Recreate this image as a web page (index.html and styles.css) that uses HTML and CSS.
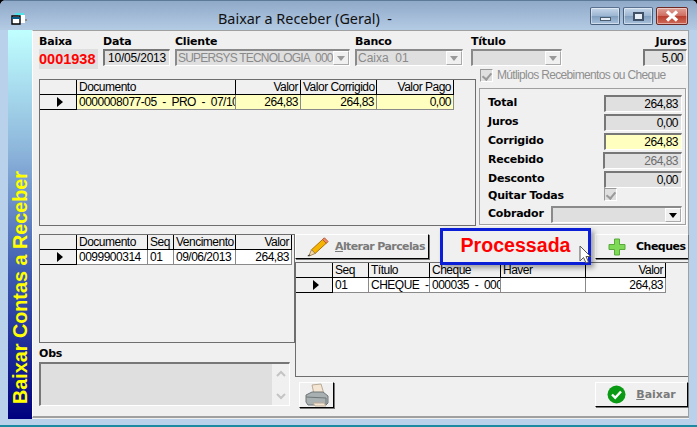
FILE: index.html
```html
<!DOCTYPE html>
<html lang="pt-BR">
<head>
    <meta charset="UTF-8">
    <title>Baixar a Receber (Geral)</title>
    <link rel="stylesheet" href="styles.css">
</head>
<body>
    <div class="window">
        <div class="titlebar">
            <svg class="app-icon" width="16" height="14" viewBox="0 0 16 14">
                <path d="M4 1h9v2H4z" fill="#4fe3ea"/>
                <path d="M7 3h7v8H7z" fill="#fff"/>
                <path d="M14 7h2v2h-2z" fill="#8a8a8a"/>
                <path d="M1 4h8v8H1z" fill="#fff" stroke="#000" stroke-width="1.4"/>
                <path d="M1 5h8v2H1z" fill="#0a5a8a"/>
            </svg>
            <span class="title">Baixar a Receber (Geral)&nbsp; -</span>
            <div class="caption-btns">
                <div class="cap-btn"><i class="cap-min"></i></div>
                <div class="cap-btn"><i class="cap-max"></i></div>
                <div class="cap-btn cap-close">
                    <svg width="16" height="12" viewBox="0 0 16 12"><path d="M3 1.500l10 9M13 1.500l-10 9" stroke="#fff" stroke-width="3.200"/></svg>
                </div>
            </div>
        </div>

        <div class="client">
            <div class="sidebar"><span class="sidebar-text">Baixar Contas a Receber</span></div>

            <div class="form">
                <div class="head-row">
                    <div class="head-cell">
                        <label>Baixa</label>
                        <div class="number">0001938</div>
                    </div>
                    <div class="head-cell">
                        <label>Data</label>
                        <div class="field field-date">10/05/2013</div>
                    </div>
                    <div class="head-cell">
                        <label>Cliente</label>
                        <div class="combo combo-cliente"><span>SUPERSYS TECNOLOGIA&nbsp; 000</span><b class="combo-arrow"></b></div>
                    </div>
                    <div class="head-cell">
                        <label>Banco</label>
                        <div class="combo combo-banco"><span>Caixa&nbsp; 01</span><b class="combo-arrow"></b></div>
                    </div>
                    <div class="head-cell">
                        <label>Título</label>
                        <div class="combo combo-titulo"><span></span><b class="combo-arrow"></b></div>
                    </div>
                    <div class="head-cell head-juros">
                        <label>Juros</label>
                        <div class="field num">5,00</div>
                    </div>
                </div>

                <div class="mid-row">
                    <div class="datagrid grid-docs">
                        <table>
                            <colgroup><col class="c-ind"><col style="width:159px"><col style="width:65px"><col style="width:76px"><col style="width:77px"></colgroup>
                            <tr><th></th><th>Documento</th><th class="num">Valor</th><th class="num">Valor Corrigido</th><th class="num">Valor Pago</th></tr>
                            <tr class="yellow"><th class="ind"><i class="arrow"></i></th><td>0000008077-05&nbsp; -&nbsp; PRO&nbsp; -&nbsp; 07/10</td><td class="num">264,83</td><td class="num">264,83</td><td class="num">0,00</td></tr>
                        </table>
                    </div>

                    <div class="side-col">
                        <div class="check-line">
                            <i class="check"></i>
                            <span>Mútliplos Recebimentos ou Cheque</span>
                        </div>
                        <div class="totals">
                            <div class="total-row"><label>Total</label><div class="field num">264,83</div></div>
                            <div class="total-row"><label>Juros</label><div class="field num">0,00</div></div>
                            <div class="total-row"><label>Corrigido</label><div class="field num field-yellow">264,83</div></div>
                            <div class="total-row"><label>Recebido</label><div class="field num field-off">264,83</div></div>
                            <div class="total-row"><label>Desconto</label><div class="field num">0,00</div></div>
                            <div class="total-row total-check"><label>Quitar Todas</label><i class="check"></i></div>
                            <div class="total-row total-combo"><label>Cobrador</label><div class="combo combo-cobrador"><span></span><b class="combo-arrow dark"></b></div></div>
                        </div>
                    </div>
                </div>

                <div class="low-row">
                    <div class="low-left">
                        <div class="datagrid grid-parcelas">
                            <table>
                                <colgroup><col class="c-ind"><col style="width:71px"><col style="width:26px"><col style="width:62px"><col style="width:56px"></colgroup>
                                <tr><th></th><th>Documento</th><th>Seq</th><th>Vencimento</th><th class="num">Valor</th></tr>
                                <tr><th class="ind"><i class="arrow"></i></th><td>0099900314</td><td>01</td><td>09/06/2013</td><td class="num">264,83</td></tr>
                            </table>
                        </div>
                        <label class="obs-label">Obs</label>
                        <div class="memo">
                            <div class="memo-scroll">
                                <svg width="10" height="7" viewBox="0 0 10 7"><path d="M1 6l4-4 4 4" fill="none" stroke="#c4c4c4" stroke-width="2"/></svg>
                                <svg width="10" height="7" viewBox="0 0 10 7"><path d="M1 1l4 4 4-4" fill="none" stroke="#c4c4c4" stroke-width="2"/></svg>
                            </div>
                        </div>
                    </div>

                    <div class="low-right">
                        <div class="toolbar">
                            <button class="btn btn-alterar" type="button">
                                <svg width="24" height="22" viewBox="0 0 26 22">
                                    <path d="M7 14L20 2l4 4-13 12z" fill="#f5b400" stroke="#a86a00"/>
                                    <path d="M19 3l2-2 4 4-2 2z" fill="#ef8a6a" stroke="#b05a30"/>
                                    <path d="M7 14l4 4-7 3z" fill="#f3d9a8" stroke="#a08050"/>
                                    <path d="M3 20l2-1 1 1-3 1z" fill="#333"/>
                                </svg>
                                <span class="btn-off"><u>A</u>lterar Parcelas</span>
                            </button>
                            <button class="btn btn-cheques" type="button">
                                <svg width="18" height="18" viewBox="0 0 18 18">
                                    <path d="M6.500 1h5v5.500H17v5h-5.500V17h-5v-5.500H1v-5h5.500z" fill="#7ed957" stroke="#58a83a"/>
                                </svg>
                                <span>Cheques</span>
                            </button>
                        </div>
                        <div class="datagrid grid-cheques">
                            <table>
                                <colgroup><col class="c-ind"><col style="width:36px"><col style="width:61px"><col style="width:71px"><col style="width:85px"><col style="width:80px"></colgroup>
                                <tr><th></th><th>Seq</th><th>Título</th><th>Cheque</th><th>Haver</th><th class="num">Valor</th></tr>
                                <tr><th class="ind"><i class="arrow"></i></th><td>01</td><td>CHEQUE&nbsp; -</td><td>000035&nbsp; -&nbsp; 000</td><td></td><td class="num">264,83</td></tr>
                            </table>
                        </div>
                        <div class="footer">
                            <button class="btn btn-print" type="button">
                                <svg width="26" height="24" viewBox="0 0 26 24">
                                    <path d="M8 2l9-1 3 10H10z" fill="#f4e6d2" stroke="#b9ab98"/>
                                    <path d="M2 12l6-3h11l5 4v7l-2 2H4l-2-3z" fill="#a9b0b2" stroke="#6f7678"/>
                                    <path d="M2 14l20 1v6" fill="none" stroke="#6f7678"/>
                                    <path d="M9 20h11l2 3H11z" fill="#f4e6d2" stroke="#b9ab98"/>
                                </svg>
                            </button>
                            <button class="btn btn-baixar" type="button">
                                <svg width="19" height="19" viewBox="0 0 19 19">
                                    <circle cx="9.500" cy="9.500" r="9" fill="#0a9a14"/>
                                    <path d="M5 9.500l3.200 3.200L14 6.500" fill="none" stroke="#fff" stroke-width="2.400"/>
                                </svg>
                                <span class="btn-off"><u>B</u>aixar</span>
                            </button>
                        </div>
                    </div>
                </div>
            </div>
        </div>

        <!-- aviso sobre os botoes -->
        <div class="toast">Processada</div>
        <svg class="cursor" width="12" height="19" viewBox="0 0 12 19">
            <path d="M1 1v15l3.500-3.500 2.500 5.500 2.500-1-2.500-5.500h4.500z" fill="#fff" stroke="#555"/>
        </svg>
    </div>
</body>
</html>
```

FILE: styles.css
```css
* { box-sizing: border-box; }
html, body { margin: 0; padding: 0; background: #000; }
body { font-family: "Liberation Sans", Arial, sans-serif; font-size: 12px; letter-spacing: -0.5px; color: #000; }
label { font-family: "DejaVu Sans", sans-serif; font-weight: bold; font-size: 11px; line-height: 13px; display: block; letter-spacing: -0.2px; }
.num { text-align: right; }

.window { position: relative; width: 697px; height: 427px; overflow: hidden; display: flex; flex-direction: column; padding: 0 8px 6px; background: #b9d1ea; border-bottom: 2px solid #1c8aa0; border-radius: 6px 6px 0 0; }
.titlebar { flex: none; height: 30px; margin: 0 -8px; padding: 0 8px 0 11px; display: flex; align-items: center; position: relative; background: linear-gradient(#8fa9c8, #b4cbe4); border-top: 1px solid #5d7a99; }
.app-icon { flex: none; margin-top: 6px; }
.title { position: absolute; left: 218px; top: 8px; font-family: "Noto Sans", sans-serif; font-size: 14.4px; letter-spacing: 0; line-height: 19px; color: #111; }
.caption-btns { margin-left: auto; margin-top: 1px; display: flex; gap: 3px; position: relative; left: -1px; }
.cap-btn { width: 30px; height: 18px; border: 1px solid #48607c; border-top-color: #5a7290; border-radius: 2px; background: linear-gradient(#c5d7ea 0%, #9db6d2 48%, #7f9dbd 50%, #a9c2dc 100%); display: flex; align-items: center; justify-content: center; box-shadow: inset 0 0 0 1px rgba(255,255,255,.45); }
.cap-close { width: 32px; border-color: #6e2a22; background: linear-gradient(#e0a298 0%, #cf6e60 48%, #b83d2e 50%, #cf6a58 100%); }
.cap-min { width: 11px; height: 4px; margin-top: 5px; background: #e8eef5; border: 1px solid #4a5c70; }
.cap-max { width: 11px; height: 9px; background: #e8eef5; border: 2px solid #3f5268; }

.client { flex: 1; display: flex; min-height: 0; background: #f0f0f0; }
.sidebar { flex: none; width: 24px; background: linear-gradient(#c0ffff 0%, #8fb8dc 30%, #3f5cb0 62%, #00007e 100%); display: flex; align-items: flex-end; justify-content: center; padding-bottom: 15px; }
.sidebar-text { writing-mode: vertical-rl; transform: rotate(180deg); color: #ffff00; font-weight: bold; font-size: 19.8px; letter-spacing: 0; line-height: 22px; white-space: nowrap; }

.form { flex: 1; min-width: 0; background: #f0f0f0; border: 1px solid #a0a0a0; border-bottom-width: 2px; border-left-color: #fff; margin-bottom: 1px; padding: 4px 0 0 6px; }

.field { height: 17px; padding: 0 3px; line-height: 15px; background: #e0e0e0; border: 1px solid #fff; border-top: 2px solid #777; border-left: 2px solid #777; white-space: nowrap; overflow: hidden; }
.field-date { width: 67px; letter-spacing: -0.2px; }
.field-yellow { background: #ffffc0; }
.field-off { color: #6d6d6d; }
.number { width: 59px; height: 20px; background: #dfdfdf; color: #f00; font-weight: bold; font-size: 14.5px; letter-spacing: 0; line-height: 20px; }

.head-row { display: grid; grid-template-columns: 64px 72px 180px 116px 172px 44px; height: 33px; }
.head-cell label { height: 14px; }
.head-juros label { text-align: right; padding-right: 1px; }

.combo { height: 17px; display: flex; background: #dfdfdf; border: 1px solid #fff; border-top: 2px solid #8a8a8a; border-left: 2px solid #8a8a8a; color: #8a8a8a; line-height: 15px; padding-left: 1px; overflow: hidden; }
.combo span { flex: 1; white-space: nowrap; overflow: hidden; }
.combo-cliente { width: 175px; letter-spacing: -0.8px; }
.combo-banco { width: 108px; letter-spacing: 0; }
.combo-titulo { width: 91px; }
.combo-cobrador { width: 131px; }
.combo-arrow { flex: none; width: 16px; background: #f0f0f0; border: 1px solid #fff; border-right-color: #aaa; border-bottom-color: #aaa; position: relative; }
.combo-arrow::after { content: ""; position: absolute; left: 3px; top: 4px; border: 4px solid transparent; border-top: 5px solid #9a9a9a; border-bottom: 0; }
.combo-arrow.dark::after { border-top-color: #000; }

.mid-row { display: flex; height: 164px; }
.datagrid { border: 1px solid #6e6e6e; background: #f0f0f0; overflow: hidden; }
.grid-docs { flex: none; width: 437px; height: 147px; margin-top: 11px; }
.datagrid table { border-collapse: separate; border-spacing: 0; table-layout: fixed; width: 0; line-height: 14px; }
.datagrid col.c-ind { width: 37px; }
.datagrid th, .datagrid td { height: 14px; padding: 0 2px; font-weight: normal; text-align: left; white-space: nowrap; overflow: hidden; border-right: 1px solid #000; border-bottom: 1px solid #000; }
.datagrid th.num, .datagrid td.num { text-align: right; }
.datagrid td { background: #fff; border-right-color: #8a8a8a; border-bottom-color: #8a8a8a; }
.datagrid .yellow td { background: #ffffc0; }
.datagrid th.ind { position: relative; height: 15px; }
.arrow { position: absolute; right: 13px; top: 2px; border: 5px solid transparent; border-left: 6px solid #000; border-right: 0; }

.side-col { flex: none; width: 208px; margin-left: 3px; }
.check-line { display: flex; align-items: center; gap: 4px; height: 14px; padding-left: 1px; color: #8f8f8f; letter-spacing: -0.65px; white-space: nowrap; }
.check { flex: none; display: block; width: 13px; height: 13px; background: #dfdfdf; border: 1px solid #fff; border-top-color: #999; border-left-color: #999; position: relative; }
.check::after { content: ""; position: absolute; left: 3px; top: 1px; width: 4px; height: 7px; border: solid #9a9a9a; border-width: 0 2px 2px 0; transform: rotate(40deg); }

.totals { width: 207px; height: 137px; margin-top: 6px; padding: 6px 3px 0 8px; border: 1px solid #a0a0a0; box-shadow: 1px 1px 0 #fff; }
.total-row { display: flex; justify-content: space-between; align-items: flex-start; height: 19px; }
.total-row label { padding-top: 1px; }
.total-row .field { width: 78px; }
.total-row .field-off { width: 79px; }
.total-check { height: 16px; justify-content: flex-start; }
.total-check label { margin-top: -2px; width: 116px; }
.total-check .check { margin-top: -2px; }
.total-combo label { padding-top: 1px; }

.low-row { display: flex; margin-top: 2px; }
.low-left { flex: none; width: 256px; }
.grid-parcelas { height: 109px; }
.obs-label { margin-top: 3px; height: 16px; padding-top: 1px; }
.memo { width: 251px; height: 44px; background: #dfdfdf; border: 1px solid #fff; border-top: 2px solid #777; border-left: 2px solid #777; display: flex; justify-content: flex-end; }
.memo-scroll { width: 17px; height: 100%; background: #f0f0f0; display: flex; flex-direction: column; justify-content: space-between; align-items: center; padding: 6px 0 5px; }

.low-right { flex: 1; min-width: 0; }
.toolbar { display: flex; height: 28px; align-items: flex-start; }
.btn { flex: none; display: flex; align-items: center; justify-content: center; padding: 0; background: #f0f0f0; border: 1px solid #fff; border-right-color: #000; border-bottom-color: #000; box-shadow: 1px 1px 0 #777; font-family: "DejaVu Sans", sans-serif; font-size: 11px; font-weight: bold; color: #000; white-space: nowrap; }
.btn svg { flex: none; }
.btn-off { color: #7a7a7a; }
.btn-alterar { width: 134px; height: 25px; gap: 6px; justify-content: flex-start; padding-left: 9px; letter-spacing: -0.6px; }
.btn-cheques { width: 93px; height: 25px; margin-left: 166px; gap: 10px; justify-content: flex-start; padding-left: 12px; letter-spacing: -0.5px; border-right: 0; }
.grid-cheques { height: 115px; border-right: 0; }
.footer { display: flex; justify-content: space-between; padding: 5px 0 0 4px; }
.btn-print { width: 35px; height: 26px; }
.btn-baixar { width: 93px; height: 25px; gap: 10px; }

.toast { position: absolute; left: 440px; top: 228px; width: 151px; height: 37px; display: flex; align-items: center; justify-content: center; padding: 0 0 3px; background: #f0f0f0; border: 3px solid #0a1fd6; color: #f00; font-weight: bold; font-size: 19.6px; letter-spacing: 0; box-shadow: 3px 3px 5px rgba(0,0,0,.35); }
.cursor { position: absolute; left: 579px; top: 245px; }
```
